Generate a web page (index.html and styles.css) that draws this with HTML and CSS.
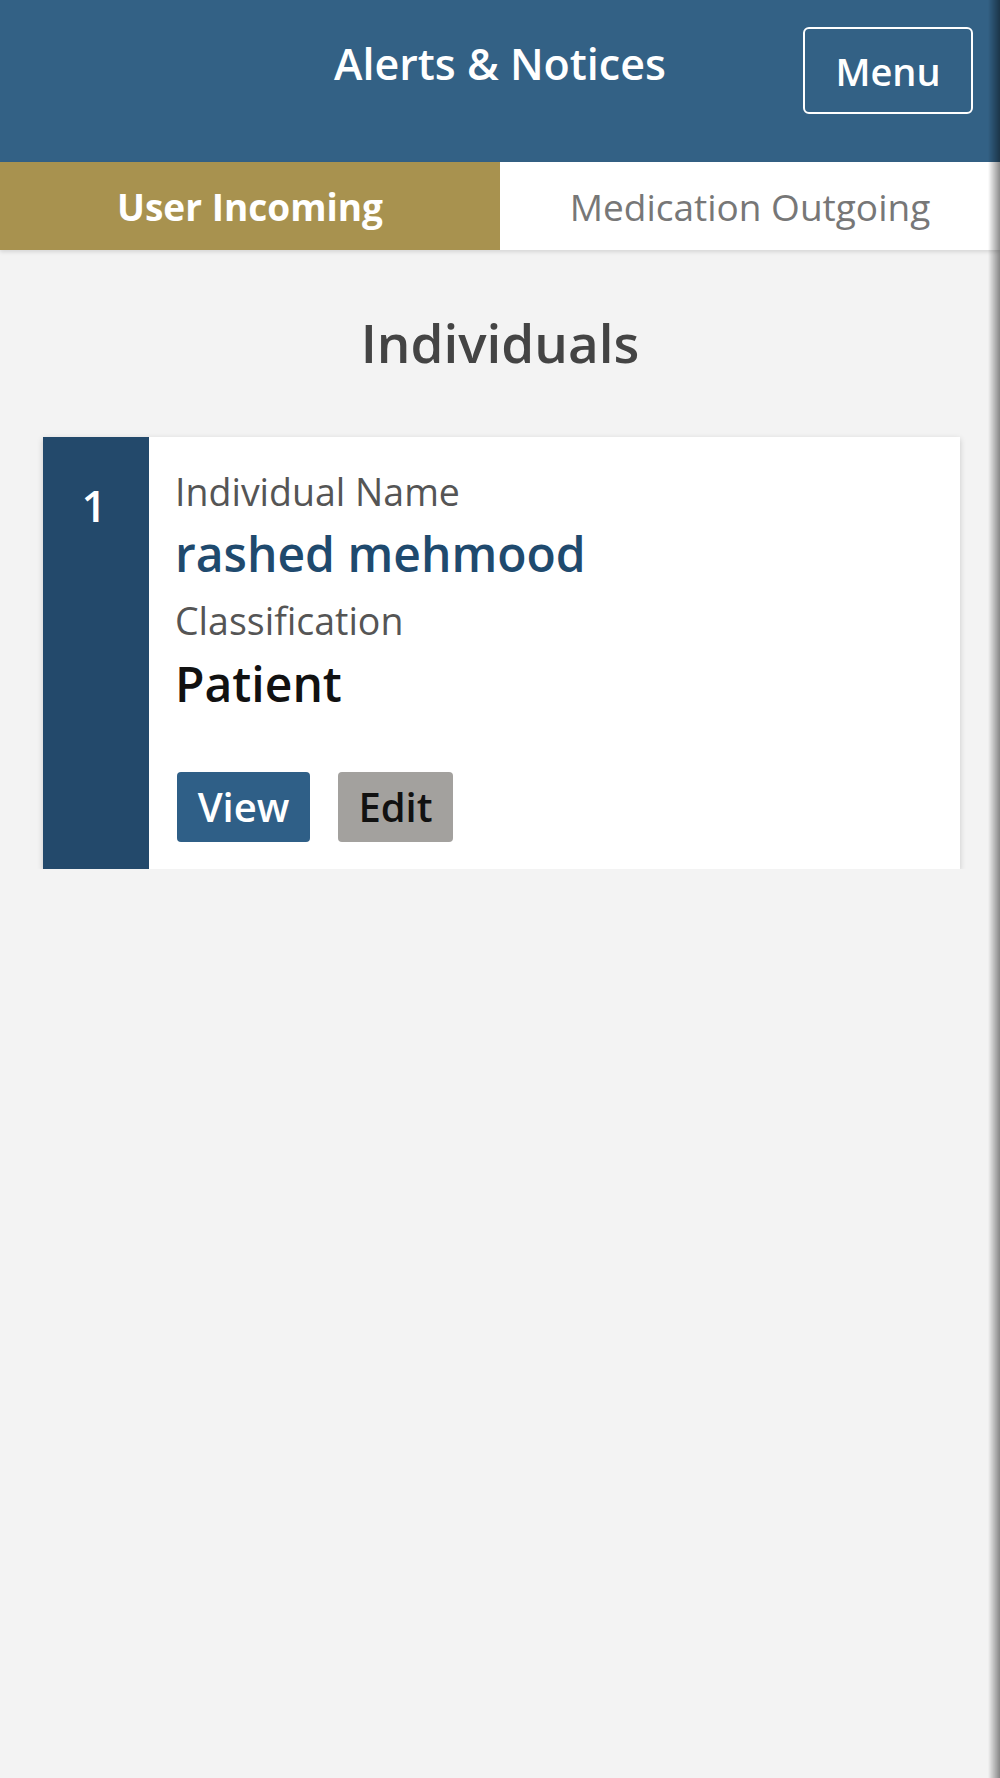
FILE: index.html
```html
<!DOCTYPE html>
<html lang="en">
<head>
    <meta charset="UTF-8">
    <meta name="viewport" content="width=device-width, initial-scale=1.0">
    <title>Alerts &amp; Notices</title>
    <link rel="stylesheet" href="styles.css">
</head>
<body>
    <div class="header">
        <div class="header-title">Alerts &amp; Notices</div>
        <button class="menu-button">Menu</button>
    </div>

    <div class="tabs">
        <div class="tab active">User Incoming</div>
        <div class="tab">Medication Outgoing</div>
    </div>

    <h1 class="section-title">Individuals</h1>

    <div class="card">
        <div class="card-index">1</div>
        <div class="card-body">
            <div class="label">Individual Name</div>
            <div class="name">rashed mehmood</div>
            <div class="label label-gap">Classification</div>
            <div class="value">Patient</div>
            <div class="card-actions">
                <button class="btn btn-view">View</button>
                <button class="btn btn-edit">Edit</button>
            </div>
        </div>
    </div>

    <div class="edge-shade"></div>
</body>
</html>
```

FILE: styles.css
```css
/* General Styling */
body, html {
    margin: 0;
    min-height: 100%;
    background-color: #f3f3f3;
    font-family: "Open Sans", "Noto Sans", sans-serif;
}

/* Header */
.header {
    height: 162px;
    box-sizing: border-box;
    padding: 27px 27px 0;
    background-color: #336185;
    display: grid;
    grid-template-columns: 1fr auto 1fr;
    align-items: start;
}
.header-title {
    grid-column: 2;
    margin-top: 11px;
    color: #fff;
    font-size: 43px;
    font-weight: 600;
    line-height: 52px;
}
.menu-button {
    grid-column: 3;
    justify-self: end;
    width: 170px;
    height: 87px;
    border: 2px solid #fff;
    border-radius: 6px;
    background: transparent;
    color: #fff;
    font-family: inherit;
    font-size: 38px;
    font-weight: 600;
    line-height: 46px;
    padding: 0;
}

/* Tabs */
.tabs {
    display: flex;
    height: 88px;
    box-shadow: 0 2px 4px rgba(0, 0, 0, 0.12);
}
.tab {
    flex: 1;
    display: flex;
    align-items: center;
    justify-content: center;
    background-color: #fff;
    color: #777;
    font-size: 37px;
}
.tab.active {
    background-color: #a8924f;
    color: #fff;
    font-weight: 700;
}

/* Section */
.section-title {
    margin: 63px 0 64px;
    text-align: center;
    color: #444;
    font-size: 53px;
    font-weight: 600;
    line-height: 60px;
}

/* Card */
.card {
    display: flex;
    margin: 0 40px 0 43px;
    background-color: #fff;
    box-shadow: 0 2px 6px rgba(0, 0, 0, 0.18);
}
.card-index {
    width: 106px;
    flex-shrink: 0;
    box-sizing: border-box;
    padding: 42px 4px 0 0;
    background-color: #23496b;
    color: #fff;
    text-align: center;
    font-size: 44px;
    font-weight: 600;
    line-height: 52px;
}
.card-body {
    flex: 1;
    padding: 33px 26px 27px;
}
.label {
    color: #555;
    font-size: 37.5px;
    line-height: 44px;
}
.label-gap {
    margin-top: 15px;
}
.name {
    margin-top: 10px;
    color: #1f4a6e;
    font-size: 48px;
    font-weight: 600;
    line-height: 60px;
}
.value {
    margin-top: 13px;
    color: #111;
    font-size: 48px;
    font-weight: 600;
    line-height: 56px;
}

/* Buttons */
.card-actions {
    display: flex;
    gap: 28px;
    margin: 60px 0 0 2px;
}
.btn {
    height: 70px;
    padding: 0;
    border: none;
    border-radius: 4px;
    font-family: inherit;
    font-size: 40px;
    font-weight: 600;
    line-height: 48px;
}
.btn-view {
    width: 133px;
    background-color: #2f5f87;
    color: #fff;
}
.btn-edit {
    width: 115px;
    background-color: #a3a19e;
    color: #111;
}

/* Right edge shade */
.edge-shade {
    position: fixed;
    top: 0;
    right: 0;
    bottom: 0;
    width: 12px;
    background: linear-gradient(to right, rgba(0, 0, 0, 0), rgba(0, 0, 0, 0.45));
}
```
